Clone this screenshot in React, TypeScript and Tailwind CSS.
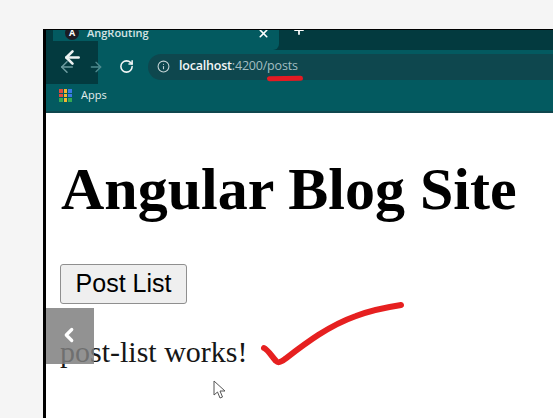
import { ArrowLeft, ArrowRight, ChevronLeft, Info, Plus, RotateCw, X } from "lucide-react"

const appColors = ["#e0483e", "#f2b632", "#3b78e7", "#e0483e", "#f2b632", "#3b78e7", "#34a853", "#f2b632", "#34a853"]

function BrowserBar() {
  return (
    <div className="relative font-['Open_Sans',sans-serif]">
      {/* Tab strip, cut at the top by the video frame */}
      <div className="flex h-[20px] overflow-hidden bg-[#033a3f] pl-[7px]">
        <div className="flex h-[20px] w-[226px] items-center rounded-br-[6px] bg-[#035a60] pl-[12px] pr-[9px] text-[11px] font-semibold text-[#d5e4e5]">
          <span className="relative z-10 flex h-[14px] w-[14px] -translate-y-[7px] items-center justify-center rounded-full bg-[#1c1c24] text-[9px] font-bold text-white">A</span>
          <span className="relative z-10 ml-[8px] -translate-y-[7px]">AngRouting</span>
          <X className="ml-auto -translate-y-[7px] text-white" size={13} strokeWidth={3} />
        </div>
        <Plus className="ml-[13px] -translate-y-[7px] text-white" size={14} strokeWidth={3} />
      </div>
      {/* Toolbar */}
      <div className="flex h-[30px] items-center bg-[#035a60] pt-[3px]">
        <ArrowLeft className="relative z-10 ml-[12px] text-[#6d9ca0]" size={18} strokeWidth={2} />
        <ArrowRight className="relative z-10 ml-[12px] text-[#4f8a8e]" size={16} strokeWidth={2} />
        <RotateCw className="relative z-10 ml-[15px] text-[#f2f6f6]" size={15} strokeWidth={2.5} />
        <div className="ml-[14px] flex h-[26px] flex-1 items-center rounded-l-[13px] bg-[#0e474e] pl-[9px] text-[12.5px]">
          <Info className="text-[#c4d3d5]" size={13} strokeWidth={2} />
          <span className="ml-[9px] font-semibold tracking-[-0.2px] text-[#f2f6f6]">localhost</span>
          <span className="tracking-[-0.2px] text-[#a3bec1]">:4200/posts</span>
        </div>
      </div>
      {/* Bookmarks */}
      <div className="flex h-[33px] items-center border-b-2 border-[#0e474e] bg-[#035a60] pl-[13px] text-[11px] text-[#e3eced]">
        <div className="grid h-[13px] w-[13px] grid-cols-3 gap-[1px]">
          {appColors.map((color, i) => (
            <span key={i} className="block" style={{ backgroundColor: color }} />
          ))}
        </div>
        <span className="ml-[9px]">Apps</span>
      </div>
      {/* Hovered back button of the video player */}
      <div className="absolute left-0 top-[11px] flex h-[43px] w-[52px] items-start justify-center bg-[#033a3f] pt-[6px]">
        <ArrowLeft className="relative z-20 text-[#eef3f3]" size={21} strokeWidth={3} />
      </div>
    </div>
  )
}

function Page() {
  return (
    <div className="relative flex-1 bg-white pl-[14px] font-['Liberation_Serif',serif] text-black">
      <h1 className="ml-[1px] mt-[44px] text-[60px] font-bold leading-[64px]">Angular Blog Site</h1>
      <button className="mt-[43px] block h-[40px] w-[127px] rounded-[3px] border border-[#8f8f8f] bg-[#efefef] font-['Liberation_Sans',sans-serif] text-[25px]">
        Post List
      </button>
      <p className="mt-[29px] text-[30px] leading-[37px] text-[#161616]">post-list works!</p>

      {/* Player previous button */}
      <div className="absolute left-0 top-[195px] flex h-[56px] w-[48px] items-center justify-center bg-[#7f7f7f]/85 pb-[2px] pr-[3px]">
        <ChevronLeft className="text-white" size={22} strokeWidth={3.5} />
      </div>

      {/* Red tick drawn on the video */}
      <svg className="absolute left-[210px] top-[185px]" width="155" height="70" viewBox="0 0 155 70" fill="none">
        <path d="M8 50 C11 51 15 57 20 63 C22 65 24 65 29 61 C50 45 72 28 100 18 C118 11 132 9 145 7" stroke="#e62020" strokeWidth="6" strokeLinecap="round" strokeLinejoin="round" />
      </svg>

      {/* Mouse cursor */}
      <svg className="absolute left-[167px] top-[267px]" width="14" height="20" viewBox="0 0 14 20" fill="#fff" stroke="#555" strokeWidth="1">
        <path d="M1 1 L1 15 L4.5 12 L7 18 L9.5 17 L7 11 L12 11 Z" />
      </svg>
    </div>
  )
}

export default function App() {
  return (
    <div className="h-[418px] w-[553px] overflow-hidden bg-[#f5f5f5] pl-[43px] pt-[29px]">
      <div className="flex h-[389px] flex-col border-l-[3px] border-t border-black">
        <BrowserBar />
        <Page />
      </div>
      {/* Red underline under the address */}
      <div className="absolute left-[267px] top-[76px] h-[5px] w-[36px] -rotate-1 rounded-full bg-[#e31b23]" />
    </div>
  )
}
